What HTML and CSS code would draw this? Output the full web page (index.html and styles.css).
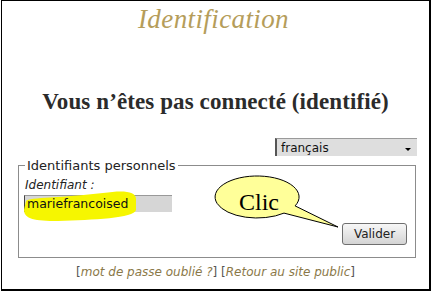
FILE: index.html
```html
<!DOCTYPE html>
<html lang="fr">
<head>
<meta charset="utf-8">
<title>Identification</title>
<link rel="stylesheet" href="styles.css">
</head>
<body>
<div class="frame">
  <h1 class="title">Identification</h1>
  <h2 class="heading">Vous n’êtes pas connecté (identifié)</h2>
  <div class="lang-row">
    <div class="select"><span class="select-text">français</span><span class="arrow"></span></div>
  </div>
  <fieldset class="creds">
    <legend class="legend">Identifiants personnels</legend>
    <div class="label">Identifiant :</div>
    <div class="input">
      <svg class="hl" width="116" height="32" viewBox="0 0 116 32">
        <path d="M 3 11 C 6 7, 40 8, 80 3 C 100 0, 113 1, 113 9 L 113 20 C 111 28, 70 30, 35 31 C 12 31, 1 29, 1 20 Z" fill="#f6f600"/>
      </svg>
      <span class="val">mariefrancoised</span>
    </div>
    <div class="actions"><button class="btn" type="button">Valider</button></div>
  </fieldset>
  <p class="links">[<a class="link">mot de passe oublié ?</a>] [<a class="link">Retour au site public</a>]</p>
  <svg class="callout" width="130" height="56" viewBox="0 0 130 56">
    <path d="M 71 38.1 A 42 21 0 1 1 82.1 30.9 L 125 52 Z" fill="#ffff99" stroke="#000" stroke-width="1"/>
    <text x="26" y="35" class="callout-text">Clic</text>
  </svg>
</div>
</body>
</html>
```
FILE: styles.css
```css
html, body {
  margin: 0;
  padding: 0;
  background: #fff;
}
.frame {
  position: relative;
  box-sizing: border-box;
  margin-left: 1px;
  width: 430px;
  height: 291px;
  border-style: solid;
  border-color: #000;
  border-width: 1px 2px 2px 1px;
  padding-top: 3px;
  font-family: "DejaVu Sans", Verdana, sans-serif;
}
.title {
  margin: 0 0 0 -4px;
  font-family: "Liberation Serif", "Times New Roman", serif;
  font-style: italic;
  font-weight: normal;
  font-size: 27px;
  letter-spacing: 0.4px;
  line-height: 30px;
  color: #b59d5a;
  text-align: center;
}
.heading {
  margin: 55px 0 0;
  font-family: "Liberation Serif", "Times New Roman", serif;
  font-weight: bold;
  font-size: 23px;
  letter-spacing: 0.1px;
  line-height: 26px;
  color: #2b2b2b;
  text-align: center;
}
.lang-row {
  display: flex;
  justify-content: flex-end;
  margin: 23px 12px 0 0;
}
.select {
  box-sizing: border-box;
  width: 142px;
  height: 18px;
  display: flex;
  align-items: center;
  justify-content: space-between;
  background: #dedede;
  border-left: 2px solid #555;
  border-top: 1px solid #9a9a9a;
  padding: 0 6px 0 4px;
  font-size: 12px;
  color: #111;
}
.arrow {
  width: 0;
  height: 0;
  border-left: 3px solid transparent;
  border-right: 3px solid transparent;
  border-top: 3px solid #000;
  margin-top: 3px;
}
.creds {
  margin: 2px 13px 0 16px;
  padding: 0 8px 12px 6px;
  border: 1px solid #8c8c8c;
  min-width: 0;
}
.legend {
  padding: 0 2px;
  font-size: 13px;
  line-height: 15px;
  color: #222;
}
.label {
  margin-top: 5px;
  font-size: 12px;
  line-height: 14px;
  font-style: italic;
  color: #222;
}
.input {
  position: relative;
  box-sizing: border-box;
  margin: 3px 0 0 -1px;
  width: 148px;
  height: 17px;
  background: #d6d6d6;
  border-left: 1px solid #444;
  border-top: 1px solid #999;
  padding-left: 2px;
  font-size: 12.5px;
  line-height: 16px;
  color: #111;
}
.hl {
  position: absolute;
  left: -2px;
  top: -6px;
}
.val {
  position: relative;
}
.actions {
  display: flex;
  justify-content: flex-end;
  margin-top: 11px;
}
.btn {
  box-sizing: border-box;
  width: 65px;
  height: 22px;
  padding: 0;
  border: 1px solid #6f6f6f;
  border-radius: 3px;
  background: linear-gradient(#f7f7f7, #e6e6e6 50%, #d4d4d4);
  font-family: "DejaVu Sans", Verdana, sans-serif;
  font-size: 12px;
  color: #222;
}
.links {
  margin: 7px 0 0;
  text-align: center;
  font-size: 12px;
  line-height: 14px;
  color: #555;
}
.link {
  font-style: italic;
  color: #8a7848;
}
.callout {
  position: absolute;
  left: 211px;
  top: 174px;
}
.callout-text {
  font-family: "Liberation Serif", "Times New Roman", serif;
  font-size: 24px;
  fill: #000;
}
```
